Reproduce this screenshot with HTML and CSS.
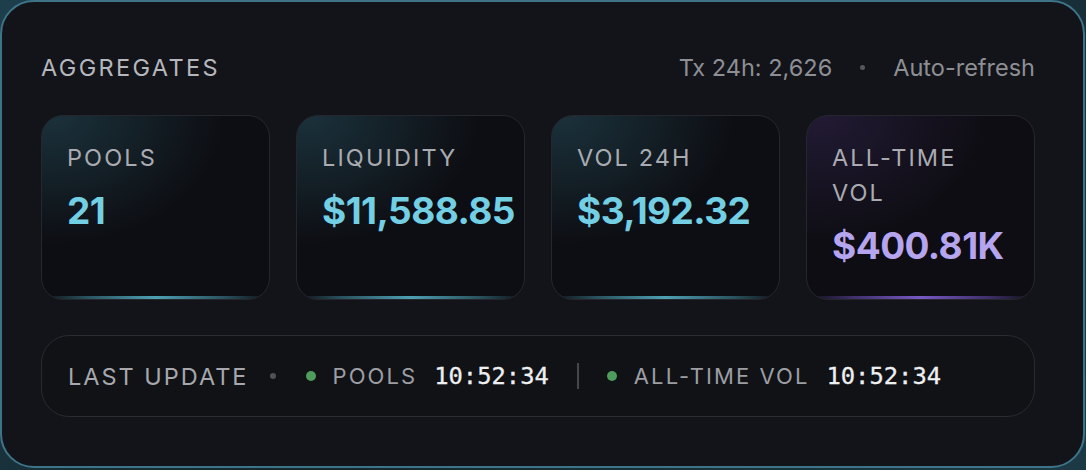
FILE: index.html
```html
<!DOCTYPE html>
<html>
<head>
<meta charset="utf-8">
<link rel="stylesheet" href="styles.css">
</head>
<body>
<div class="panel">
  <div class="header">
    <div class="title">AGGREGATES</div>
    <div class="meta">
      <span>Tx 24h: 2,626</span>
      <span class="meta-dot"></span>
      <span>Auto-refresh</span>
    </div>
  </div>
  <div class="cards">
    <div class="card">
      <div class="label">POOLS</div>
      <div class="value">21</div>
      <div class="glow-line"></div>
    </div>
    <div class="card">
      <div class="label">LIQUIDITY</div>
      <div class="value">$11,588.85</div>
      <div class="glow-line"></div>
    </div>
    <div class="card">
      <div class="label">VOL 24H</div>
      <div class="value">$3,192.32</div>
      <div class="glow-line"></div>
    </div>
    <div class="card card-purple">
      <div class="label">ALL-TIME<br>VOL</div>
      <div class="value">$400.81K</div>
      <div class="glow-line"></div>
    </div>
  </div>
  <div class="status">
    <span class="status-label">LAST UPDATE</span>
    <span class="grey-dot"></span>
    <span class="item">
      <span class="green-dot"></span>
      <span class="item-label">POOLS</span>
      <span class="time">10:52:34</span>
    </span>
    <span class="divider"></span>
    <span class="item">
      <span class="green-dot"></span>
      <span class="item-label">ALL-TIME VOL</span>
      <span class="time">10:52:34</span>
    </span>
  </div>
</div>
</body>
</html>
```

FILE: styles.css
```css
html, body {
  margin: 0;
  padding: 0;
}
body {
  width: 1086px;
  height: 470px;
  background: linear-gradient(135deg, #1d3f4b 0%, #15272f 50%, #1c3a46 100%);
  font-family: Inter, "Noto Sans", sans-serif;
  overflow: hidden;
}
.panel {
  box-sizing: border-box;
  width: 1085px;
  height: 468px;
  border: 2px solid #3e7488;
  border-radius: 34px;
  background: #131419;
  padding: 44px 48px 0 39px;
}
.header {
  display: flex;
  justify-content: space-between;
  align-items: center;
  height: 42px;
  margin-bottom: 27px;
}
.title {
  font-size: 23.5px;
  letter-spacing: 0.1em;
  color: #b5b7bd;
}
.meta {
  display: flex;
  align-items: center;
  gap: 28px;
  font-size: 23.5px;
  color: #8d8f95;
}
.meta-dot {
  width: 5px;
  height: 5px;
  border-radius: 50%;
  background: #55575d;
}
.cards {
  display: grid;
  grid-template-columns: repeat(4, 1fr);
  gap: 26px;
  height: 185px;
  margin-bottom: 35px;
}
.card {
  position: relative;
  overflow: hidden;
  box-sizing: border-box;
  border: 1px solid #26272d;
  border-radius: 22px;
  padding: 24px 20px 0 25px;
  background:
    radial-gradient(ellipse 75% 70% at 5% 0%, rgba(38, 78, 92, 0.55), rgba(38, 78, 92, 0) 100%),
    #0d0e13;
}
.card-purple {
  background:
    radial-gradient(ellipse 75% 70% at 5% 0%, rgba(58, 42, 92, 0.45), rgba(58, 42, 92, 0) 100%),
    #0e0d13;
}
.label {
  font-size: 23.5px;
  line-height: 35px;
  letter-spacing: 0.09em;
  color: #a9abb1;
}
.value {
  margin-top: 14px;
  font-size: 37px;
  line-height: 44px;
  font-weight: 700;
  letter-spacing: -0.015em;
  color: #73cfe3;
  white-space: nowrap;
}
.card-purple .value {
  color: #b5a4ee;
}
.glow-line {
  position: absolute;
  left: 0;
  right: 0;
  bottom: 0;
  height: 3px;
  background: linear-gradient(90deg, rgba(70, 150, 170, 0) 0%, rgba(70, 150, 170, 0.5) 20%, rgba(80, 168, 188, 0.95) 50%, rgba(70, 150, 170, 0.5) 80%, rgba(70, 150, 170, 0) 100%);
}
.card-purple .glow-line {
  background: linear-gradient(90deg, rgba(110, 80, 190, 0) 0%, rgba(110, 80, 190, 0.5) 20%, rgba(125, 92, 205, 0.95) 50%, rgba(110, 80, 190, 0.5) 80%, rgba(110, 80, 190, 0) 100%);
}
.status {
  box-sizing: border-box;
  height: 82px;
  border: 1px solid #2a2b31;
  border-radius: 28px;
  background: #111216;
  display: flex;
  align-items: center;
  padding-left: 26px;
}
.status-label {
  font-size: 23.5px;
  letter-spacing: 0.085em;
  color: #a6a8ae;
}
.grey-dot {
  width: 6px;
  height: 6px;
  border-radius: 50%;
  background: #4f5157;
  margin: 0 30px 0 21px;
}
.item {
  display: flex;
  align-items: center;
}
.green-dot {
  width: 10px;
  height: 10px;
  border-radius: 50%;
  background: #4f9d5c;
  margin-right: 17px;
}
.item-label {
  font-size: 22px;
  letter-spacing: 0.095em;
  color: #9c9ea4;
  margin-right: 17px;
}
.time {
  font-family: "DejaVu Sans Mono", "Liberation Mono", monospace;
  font-size: 23.8px;
  font-weight: 400;
  color: #eeeff1;
  -webkit-text-stroke: 0.3px #eeeff1;
}
.divider {
  width: 2px;
  height: 26px;
  background: #45474d;
  margin: 0 28px 0 28px;
}
```
